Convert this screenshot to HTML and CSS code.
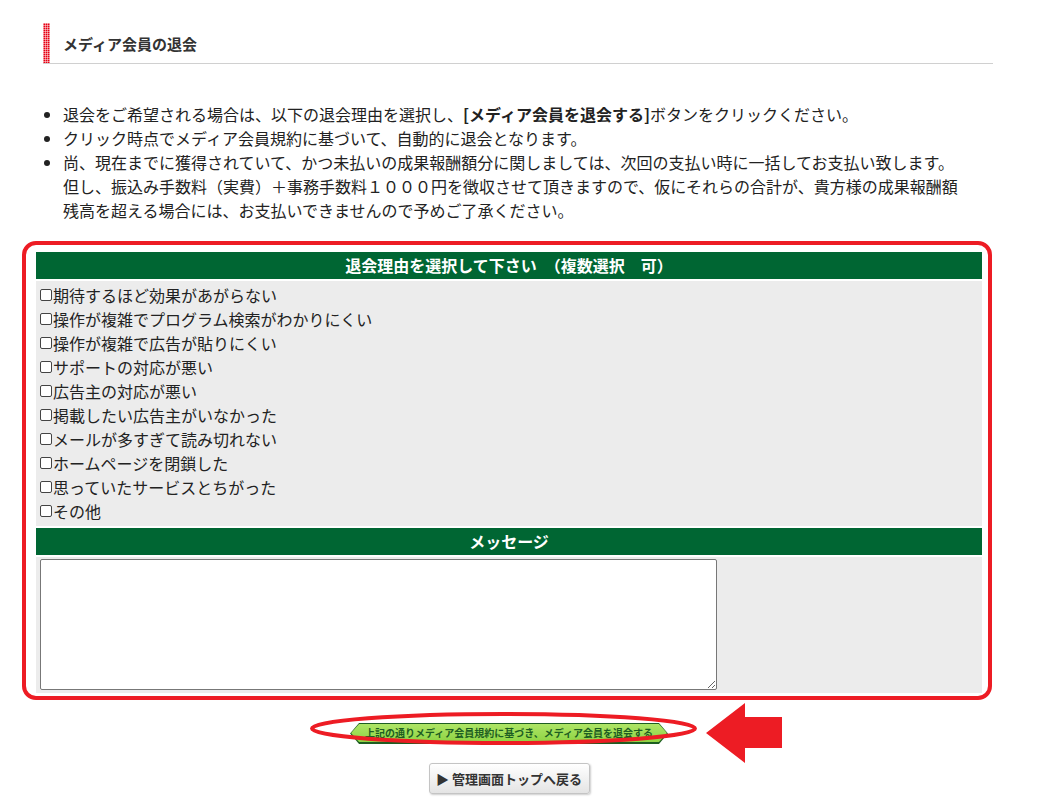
FILE: index.html
```html
<!DOCTYPE html>
<html lang="ja">
<head>
    <meta charset="UTF-8">
    <title>メディア会員の退会</title>
    <link rel="stylesheet" href="styles.css">
</head>
<body>
    <div class="page">
        <h1 class="head">メディア会員の退会</h1>

        <ul class="notes">
            <li>退会をご希望される場合は、以下の退会理由を選択し、<b>[メディア会員を退会する]</b>ボタンをクリックください。</li>
            <li>クリック時点でメディア会員規約に基づいて、自動的に退会となります。</li>
            <li>尚、現在までに獲得されていて、かつ未払いの成果報酬額分に関しましては、次回の支払い時に一括してお支払い致します。<br>但し、振込み手数料（実費）＋事務手数料１０００円を徴収させて頂きますので、仮にそれらの合計が、貴方様の成果報酬額<br>残高を超える場合には、お支払いできませんので予めご了承ください。</li>
        </ul>

        <div class="form-area">
            <div class="bar">退会理由を選択して下さい　（複数選択　可）</div>
            <div class="cell reasons">
                <label><span class="box"></span>期待するほど効果があがらない</label>
                <label><span class="box"></span>操作が複雑でプログラム検索がわかりにくい</label>
                <label><span class="box"></span>操作が複雑で広告が貼りにくい</label>
                <label><span class="box"></span>サポートの対応が悪い</label>
                <label><span class="box"></span>広告主の対応が悪い</label>
                <label><span class="box"></span>掲載したい広告主がいなかった</label>
                <label><span class="box"></span>メールが多すぎて読み切れない</label>
                <label><span class="box"></span>ホームページを閉鎖した</label>
                <label><span class="box"></span>思っていたサービスとちがった</label>
                <label><span class="box"></span>その他</label>
            </div>
            <div class="bar">メッセージ</div>
            <div class="cell">
                <textarea class="message"></textarea>
            </div>
            <!-- red annotation frame -->
            <div class="mark-frame"></div>
        </div>

        <div class="submit-row">
            <a class="btn-go" href="#"><span>上記の通りメディア会員規約に基づき、メディア会員を退会する</span></a>
            <svg class="mark" width="520" height="70" viewBox="0 0 520 70">
                <ellipse cx="199.5" cy="28.5" rx="191.5" ry="14.5" fill="none" stroke="#ed1c24" stroke-width="4"/>
                <polygon points="402,33 441,3 441,17 478,17 478,48 441,48 441,63" fill="#ed1c24"/>
            </svg>
        </div>

        <div class="back-row">
            <a class="btn-back" href="#">▶ 管理画面トップへ戻る</a>
        </div>
    </div>
</body>
</html>
```

FILE: styles.css
```css
body {
    margin: 0;
    background: #fff;
    color: #222;
    font-family: "Noto Sans CJK JP", "Noto Sans", sans-serif;
    font-size: 16px;
}
.page {
    width: 957px;
    margin-left: 36px;
    padding-top: 23px;
    padding-bottom: 10px;
}
.head {
    display: flex;
    align-items: center;
    height: 40px;
    margin: 0 0 0 7px;
    border-bottom: 1px solid #d0d0d0;
    font-size: 15px;
    font-weight: bold;
    color: #333;
}
.head::before {
    content: "";
    align-self: stretch;
    width: 7px;
    margin-right: 13px;
    background-color: #e60012;
    background-image: linear-gradient(90deg, rgba(255,255,255,.45) 1px, transparent 1px),
                      linear-gradient(rgba(255,255,255,.45) 1px, transparent 1px);
    background-size: 2px 2px;
}
.notes {
    margin: 38px 0 0 7px;
    padding-left: 20px;
    line-height: 24px;
}
.form-area {
    position: relative;
    width: 946px;
    margin-top: 30px;
    display: flex;
    flex-direction: column;
    gap: 2px;
}
.bar {
    background: #006633;
    color: #fff;
    font-weight: bold;
    text-align: center;
    height: 27px;
    line-height: 27px;
}
.cell {
    background: #ececec;
    padding: 2px 4px 3px;
}
.reasons label {
    display: flex;
    align-items: center;
    height: 24px;
}
.box {
    width: 10px;
    height: 10px;
    border: 1px solid #444;
    border-radius: 2px;
    margin-right: 1px;
    background: #fff;
}
.message {
    display: block;
    width: 677px;
    height: 131px;
    box-sizing: border-box;
    border: 1px solid #777;
    border-radius: 2px;
    margin: 0;
}
.mark-frame {
    position: absolute;
    left: -14px;
    top: -11px;
    width: 970px;
    height: 459px;
    box-sizing: border-box;
    border: 4px solid #ed1c24;
    border-radius: 14px;
    pointer-events: none;
}
.submit-row {
    position: relative;
    width: 946px;
    margin-top: 25px;
    text-align: center;
    height: 21px;
}
.mark {
    position: absolute;
    left: 268px;
    top: -18px;
    overflow: visible;
    pointer-events: none;
}
.btn-go {
    display: inline-block;
    padding: 1px 1px 2px;
    background: #1d5e22;
    clip-path: polygon(9px 0, calc(100% - 9px) 0, 100% 50%, calc(100% - 9px) 100%, 9px 100%, 0 50%);
    text-decoration: none;
}
.btn-go span {
    display: block;
    height: 18px;
    line-height: 18px;
    padding: 0 14px;
    background: linear-gradient(#aee566, #8ed443);
    clip-path: polygon(8px 0, calc(100% - 8px) 0, 100% 50%, calc(100% - 8px) 100%, 8px 100%, 0 50%);
    color: #1d5e22;
    font-size: 10px;
    font-weight: bold;
}
.back-row {
    width: 946px;
    margin-top: 24px;
    text-align: center;
}
.btn-back {
    display: inline-block;
    width: 161px;
    height: 31px;
    line-height: 29px;
    box-sizing: border-box;
    border: 1px solid #c4c4c4;
    border-radius: 3px;
    background: linear-gradient(#ffffff, #e4e4e4);
    box-shadow: 1px 1px 2px rgba(0,0,0,.2);
    color: #333;
    font-size: 13px;
    font-weight: bold;
    text-decoration: none;
}
```
